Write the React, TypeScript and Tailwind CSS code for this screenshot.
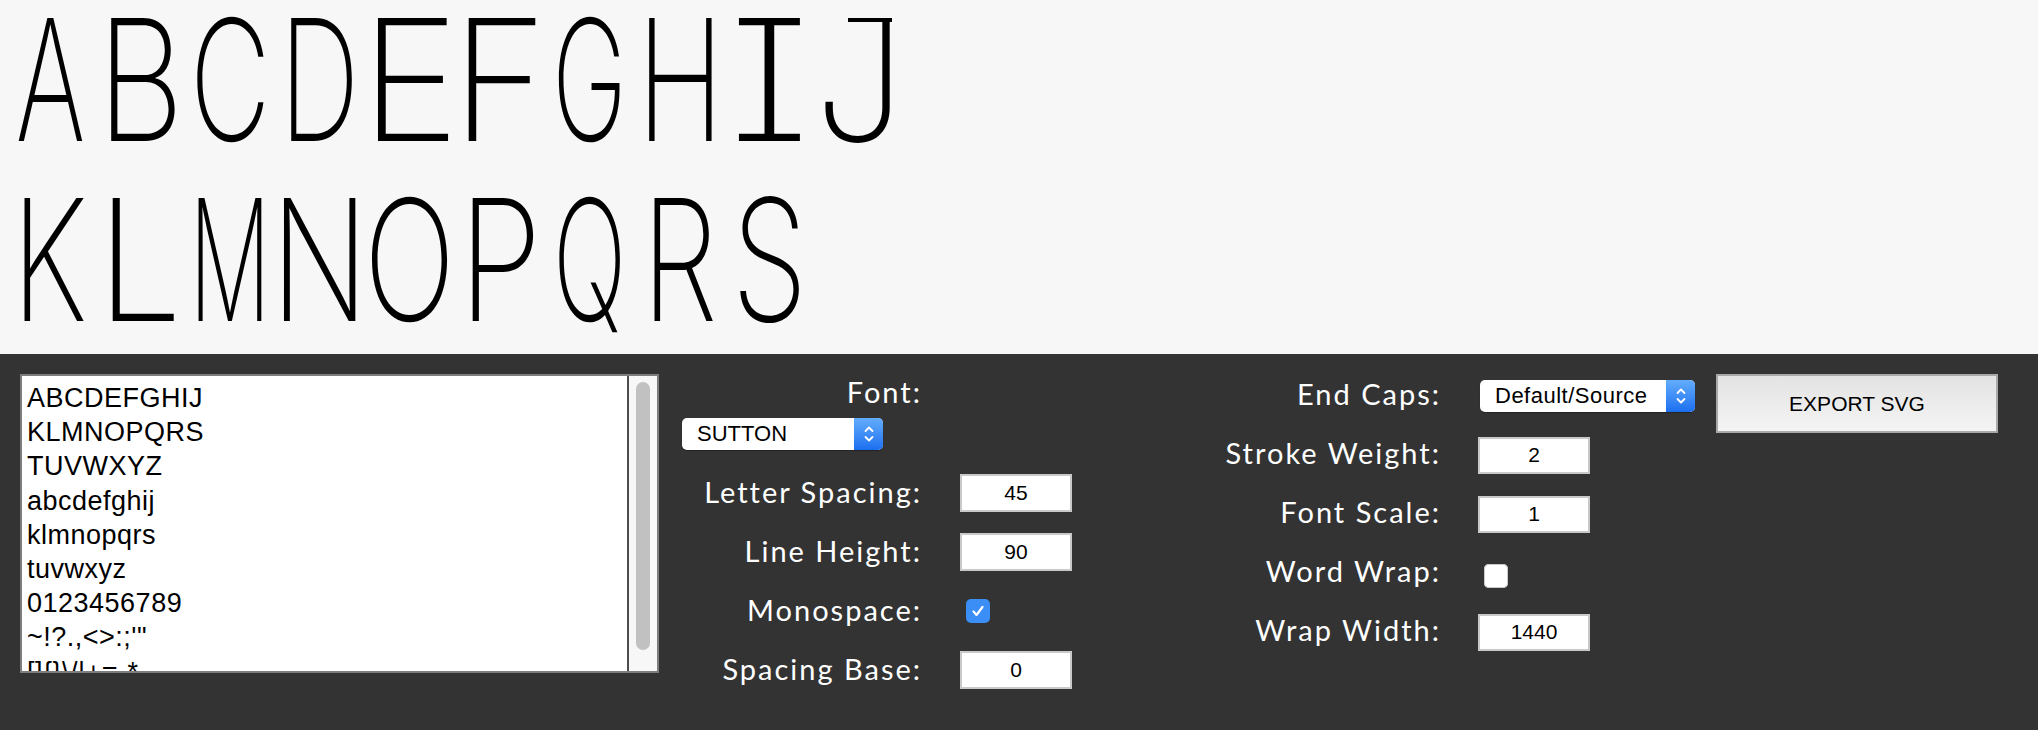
const sampleLines = [
  "ABCDEFGHIJ",
  "KLMNOPQRS",
  "TUVWXYZ",
  "abcdefghij",
  "klmnopqrs",
  "tuvwxyz",
  "0123456789",
  "~!?.,<>:;'\"",
  "[]{}\\/|+=-*_-",
];

// horizontal squeeze per glyph so every letter lands ~62px wide
const squeeze: Record<string, string> = {
  A: "scale-x-[0.63]",
  B: "scale-x-[0.8]",
  C: "scale-x-[0.66]",
  D: "scale-x-[0.66]",
  E: "scale-x-[1]",
  F: "scale-x-[0.97]",
  G: "scale-x-[0.6]",
  H: "scale-x-[0.7]",
  I: "scale-x-[1.25]",
  J: "scale-x-[0.95]",
  K: "scale-x-[0.72]",
  L: "scale-x-[0.9]",
  M: "scale-x-[0.54]",
  N: "scale-x-[0.76]",
  O: "scale-x-[0.72]",
  P: "scale-x-[0.8]",
  Q: "scale-x-[0.58]",
  R: "scale-x-[0.72]",
  S: "scale-x-[0.72]",
};

const label =
  "font-['Lato','Open_Sans',sans-serif] text-[29px] tracking-[2px] text-white leading-[36px] text-right";
const ui = "font-['Liberation_Sans','Arial',sans-serif] text-black";

function GlyphRow({ chars }: { chars: string }) {
  return (
    <div className="flex h-[180px] leading-[180px] text-black">
      {chars.split("").map((c) => (
        <span key={c} className="relative flex w-[90px] shrink-0 justify-center">
          <span className={`inline-block ${squeeze[c]}`}>{c}</span>
          {c === "J" && <span className="absolute left-[33px] top-[28px] h-[3.5px] w-[44px] bg-black" />}
        </span>
      ))}
    </div>
  );
}

function Chevrons() {
  return (
    <svg width="12" height="20" viewBox="0 0 12 20" fill="none" stroke="white" strokeWidth="1.8" strokeLinecap="round" strokeLinejoin="round">
      <path d="M2.5 7 L6 3.5 L9.5 7" />
      <path d="M2.5 13 L6 16.5 L9.5 13" />
    </svg>
  );
}

function Select({ value, width, track }: { value: string; width: string; track: string }) {
  return (
    <div className={`flex h-[32px] ${width} overflow-hidden rounded-[5px] bg-white shadow-[0_1px_1px_rgba(0,0,0,0.3)]`}>
      <div className={`flex-1 pl-[15px] text-[22px] leading-[32px] ${track} ${ui}`}>{value}</div>
      <div className="flex w-[29px] items-center justify-center bg-gradient-to-b from-[#63acfb] to-[#1b6ff0]">
        <Chevrons />
      </div>
    </div>
  );
}

function NumberBox({ value, h }: { value: string; h: string }) {
  return (
    <input
      readOnly
      value={value}
      className={`w-[112px] ${h} border-2 border-[#c9c9c9] bg-white text-center text-[21px] outline-none ${ui}`}
    />
  );
}

function Checked() {
  return (
    <div className="flex h-[24px] w-[24px] items-center justify-center rounded-[5px] bg-[#3a8ef6]">
      <svg width="18" height="18" viewBox="0 0 18 18" fill="none" stroke="white" strokeWidth="2.2" strokeLinecap="round" strokeLinejoin="round">
        <path d="M4.5 9.5 L7.5 13 L13.5 5" />
      </svg>
    </div>
  );
}

function Unchecked() {
  return <div className="h-[24px] w-[24px] translate-y-[3px] rounded-[5px] bg-white shadow-[inset_0_0_0_1px_#c8c8c8]" />;
}

function MiddleRow({ name, children }: { name: string; children: React.ReactNode }) {
  return (
    <div className="flex h-[38px] items-center">
      <div className={`w-[240px] pb-[2px] ${label}`}>{name}</div>
      <div className="ml-[38px] flex items-center">{children}</div>
    </div>
  );
}

function RightRow({ name, children }: { name: string; children: React.ReactNode }) {
  return (
    <div className="flex h-[38px] items-center">
      <div className={`w-[216px] pb-[5px] ${label}`}>{name}</div>
      <div className="ml-[37px] flex items-center">{children}</div>
    </div>
  );
}

export default function App() {
  return (
    <div className="h-[730px] w-[2038px] overflow-hidden bg-[#333333]">
      <div className="h-[354px] overflow-hidden bg-[#f7f7f7]">
        <div className="-mt-[10px] pl-[5px] font-['Inter','Roboto',sans-serif] text-[169px] [font-feature-settings:'cv08'] [font-weight:150]">
          <GlyphRow chars="ABCDEFGHIJ" />
          <GlyphRow chars="KLMNOPQRS" />
        </div>
      </div>

      <div className="flex pl-[20px] pt-[20px]">
        <div className="flex h-[299px] w-[639px] border-2 border-[#7d7d7d] bg-white">
          <div className={`flex-1 overflow-hidden pl-[5px] pt-[5px] text-[27px] leading-[34.2px] tracking-[0.5px] ${ui}`}>
            {sampleLines.map((l) => (
              <div key={l} className="whitespace-pre">
                {l}
              </div>
            ))}
          </div>
          <div className="w-[30px] border-l-2 border-[#4d4d4d] bg-[#f7f7f7] px-[7px] pt-[6px]">
            <div className="h-[268px] rounded-full bg-[#c1c1c1]" />
          </div>
        </div>

        <div className="ml-[23px] flex flex-col">
          <div className={`w-[240px] ${label}`}>Font:</div>
          <div className="mt-[8px]">
            <Select value="SUTTON" width="w-[201px]" track="" />
          </div>
          <div className="mt-[24px] flex flex-col gap-[21px]">
            <MiddleRow name="Letter Spacing:">
              <NumberBox value="45" h="h-[38px]" />
            </MiddleRow>
            <MiddleRow name="Line Height:">
              <NumberBox value="90" h="h-[38px]" />
            </MiddleRow>
            <MiddleRow name="Monospace:">
              <div className="ml-[6px]">
                <Checked />
              </div>
            </MiddleRow>
            <MiddleRow name="Spacing Base:">
              <NumberBox value="0" h="h-[38px]" />
            </MiddleRow>
          </div>
        </div>

        <div className="ml-[153px] flex flex-col gap-[21px] pt-[3px]">
          <RightRow name="End Caps:">
            <div className="ml-[2px]">
              <Select value="Default/Source" width="w-[215px]" track="tracking-[0.5px]" />
            </div>
          </RightRow>
          <RightRow name="Stroke Weight:">
            <NumberBox value="2" h="h-[37px]" />
          </RightRow>
          <RightRow name="Font Scale:">
            <NumberBox value="1" h="h-[37px]" />
          </RightRow>
          <RightRow name="Word Wrap:">
            <div className="ml-[6px]">
              <Unchecked />
            </div>
          </RightRow>
          <RightRow name="Wrap Width:">
            <NumberBox value="1440" h="h-[37px]" />
          </RightRow>
        </div>

        <button
          className={`ml-[21px] h-[59px] w-[282px] border-2 border-[#a9a9a9] bg-gradient-to-b from-[#e3e3e3] to-[#f4f4f4] text-[21px] text-[#111] ${ui}`}
        >
          EXPORT SVG
        </button>
      </div>
    </div>
  );
}
